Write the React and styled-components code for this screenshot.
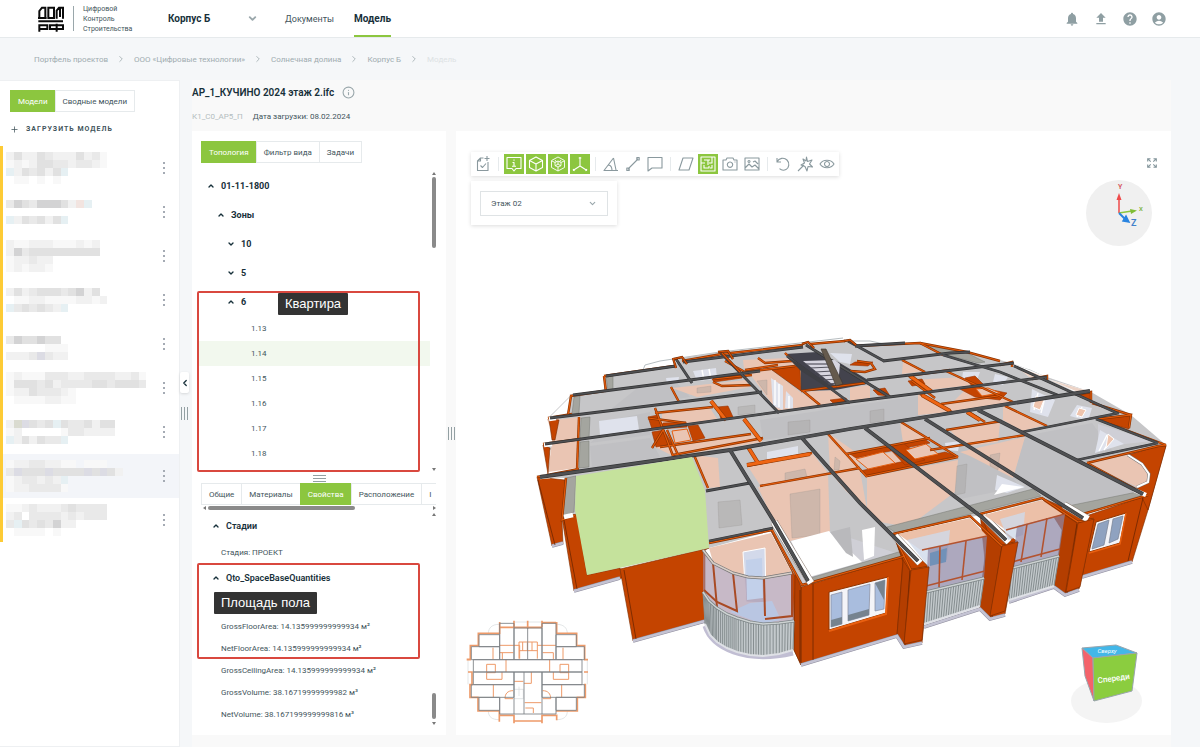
import React from 'react';
import styled, { createGlobalStyle, css } from 'styled-components';
import { MdNotifications, MdFileUpload, MdHelp, MdAccountCircle } from 'react-icons/md';
import { ChevronDown, ChevronUp, ChevronRight, ChevronLeft, Plus, Info } from 'lucide-react';

const GREEN = '#8cc63f';
const INK = '#17303a';
const TEXT = '#43555c';
const MUTED = '#9aa7ab';
const LINE = '#e6eaec';

const Global = createGlobalStyle`
  * { box-sizing: border-box; }
  body { margin: 0; background: #f5f7f9; font-family: Roboto, "Liberation Sans", sans-serif; font-size: 8px; color: ${TEXT}; }
  button, select { font: inherit; color: inherit; }
  a { color: inherit; text-decoration: none; }
  svg { display: block; flex: none; }
`;

const Page = styled.div`
  min-height: 100vh;
  display: flex;
  flex-direction: column;
`;

/* ---------- header ---------- */
const Header = styled.header`
  height: 38px;
  background: #fff;
  border-bottom: 1px solid ${LINE};
  display: flex;
  align-items: stretch;
  padding: 0 33px 0 38px;
`;
const Brand = styled.a`
  display: flex;
  align-items: center;
  width: 130px;
  gap: 9px;
`;
const BrandText = styled.span`
  border-left: 1px solid ${MUTED};
  padding-left: 9px;
  font-size: 7px;
  line-height: 10px;
  height: 25px;
  display: flex;
  flex-direction: column;
  justify-content: center;
`;
const SelectWrap = styled.label`
  position: relative;
  display: flex;
  align-items: center;
  width: ${(p) => p.$width}px;
  svg { position: absolute; right: ${(p) => p.$inset}px; pointer-events: none; }
`;
const PlainSelect = styled.select`
  appearance: none;
  width: 100%;
  padding: 0;
  border: 0;
  background: transparent;
  font-size: 10px;
  font-weight: 700;
  color: ${INK};
`;
const Nav = styled.nav`
  display: flex;
  gap: 20px;
  margin-left: 27px;
  flex: 1;
`;
const NavLink = styled.a`
  display: flex;
  align-items: center;
  font-size: ${(p) => (p.$active ? 10 : 9)}px;
  border-top: 2px solid transparent;
  border-bottom: 2px solid ${(p) => (p.$active ? GREEN : 'transparent')};
  font-weight: ${(p) => (p.$active ? 700 : 400)};
  color: ${(p) => (p.$active ? INK : TEXT)};
`;
const HeaderActions = styled.div`
  display: flex;
  align-items: center;
  gap: 13px;
`;
const IconButton = styled.button`
  border: 0;
  padding: 0;
  background: none;
  color: ${(p) => p.$color || '#8f9fa3'};
  display: flex;
  align-items: center;
  justify-content: center;
`;
const Crumbs = styled.nav`
  height: 42px;
  padding-left: 34px;
  display: flex;
  align-items: center;
  gap: 8px;
  color: #a0acb0;
  a:last-child { color: #dde2e4; }
`;

/* ---------- body ---------- */
const Body = styled.div`
  flex: 1;
  display: flex;
`;
const Sidebar = styled.aside`
  width: 180px;
  background: #fff;
  border: 1px solid #eef0f2;
  border-left: 0;
  padding-top: 9px;
`;
const Tabs = styled.div`
  display: flex;
  height: 22px;
  overflow: hidden;
  margin: ${(p) => p.$margin};
`;
const Tab = styled.button`
  height: 22px;
  padding: 0 7px;
  flex: none;
  border: 1px solid ${LINE};
  margin-left: -1px;
  background: #fff;
  white-space: nowrap;
  &:first-child { margin-left: 0; }
  ${(p) => p.$active && css`
    background: ${GREEN};
    border-color: ${GREEN};
    color: #fff;
  `}
`;
const UploadButton = styled.button`
  display: flex;
  align-items: center;
  gap: 7px;
  margin: 9px 0 9px 10px;
  height: 16px;
  padding: 0;
  border: 0;
  background: none;
  font-size: 7px;
  font-weight: 700;
  letter-spacing: 1px;
`;
const ModelList = styled.ul`
  list-style: none;
  margin: 0;
  padding: 0;
  border-left: 3px solid #fdcb35;
`;
const ModelRow = styled.li`
  height: 44px;
  display: flex;
  align-items: center;
  justify-content: space-between;
  padding: 0 13px 0 3px;
  background: ${(p) => (p.$active ? '#f3f5f9' : '#fff')};
`;
const Gutter = styled.div`
  width: 12px;
  display: grid;
  grid-template-rows: 1fr auto 1fr;
  justify-items: start;
`;
const CollapseButton = styled.button`
  align-self: end;
  margin-bottom: 14px;
  width: 9px;
  height: 21px;
  padding: 0;
  border: 0;
  border-radius: 2px;
  background: #fff;
  box-shadow: 0 1px 3px #0002;
  color: ${INK};
  display: flex;
  align-items: center;
  justify-content: center;
`;
const Workspace = styled.main`
  flex: 1;
  margin-right: 29px;
  padding-bottom: 12px;
  display: flex;
  flex-direction: column;
  background: #f9f9f9;
`;
const TitleBlock = styled.div`
  height: 51px;
  padding-top: 4px;
`;
const TitleRow = styled.div`
  display: flex;
  align-items: center;
  gap: 8px;
  height: 16px;
`;
const Title = styled.h1`
  margin: 0;
  font-size: 10px;
  font-weight: 600;
  color: ${INK};
`;
const MetaRow = styled.div`
  display: flex;
  align-items: center;
  gap: 10px;
  height: 16px;
  margin-top: 8px;
`;
const Faint = styled.span`
  color: #b4bdc0;
`;
const Panels = styled.div`
  flex: 1;
  display: flex;
`;
const Panel = styled.section`
  position: relative;
  width: 254px;
  background: #fff;
  display: flex;
  flex-direction: column;
  padding: 10px 10px 10px 0;
`;
const Splitter = styled.div`
  width: 10px;
  display: flex;
  align-items: center;
  justify-content: center;
`;
const Scroller = styled.div`
  display: flex;
  gap: 1px;
`;
const Tree = styled.ul`
  list-style: none;
  margin: 0;
  padding: 8px 0 5px 5px;
  flex: 1;
`;
const TreeNode = styled.li`
  display: flex;
  align-items: center;
  gap: 6px;
  height: 29px;
  padding-left: ${(p) => 10 + p.$level * 10}px;
  font-size: 9px;
  font-weight: 700;
  color: ${INK};
`;
const TreeLeaf = styled.li`
  display: flex;
  align-items: center;
  height: 25px;
  padding-left: 54px;
  background: ${(p) => (p.$active ? '#f2f8ee' : 'transparent')};
`;
const Track = styled.div`
  width: 5px;
  display: flex;
  flex-direction: column;
  align-items: center;
  margin-top: ${(p) => p.$top}px;
`;
const Thumb = styled.div`
  width: 4px;
  height: ${(p) => p.$size}px;
  border-radius: 2px;
  background: #8a8a8a;
`;
const Fill = styled.div`
  flex: ${(p) => (p.$fixed ? `0 0 ${p.$fixed}px` : 1)};
`;
const Arrow = styled.i`
  width: 0;
  height: 0;
  border: 2px solid transparent;
  ${(p) => p.$dir === 'up' && css`border-bottom: 3px solid #777; border-top: 0; margin-bottom: 2px;`}
  ${(p) => p.$dir === 'down' && css`border-top: 3px solid #777; border-bottom: 0;`}
  ${(p) => p.$dir === 'left' && css`border-right: 3px solid #777; border-left: 0; margin-right: 2px;`}
  ${(p) => p.$dir === 'right' && css`border-left: 3px solid #777; border-right: 0;`}
`;
const Handle = styled.div`
  height: 12px;
  padding: 4px 0 0 10px;
  display: flex;
  justify-content: center;
`;
const HTrack = styled.div`
  display: flex;
  align-items: center;
  height: 6px;
  margin-left: 11px;
`;
const HThumb = styled.div`
  width: 147px;
  height: 4px;
  border-radius: 2px;
  background: #8a8a8a;
`;
const Props = styled.div`
  flex: 1;
  padding: 2px 0 0 20px;
`;
const PropGroup = styled.h2`
  margin: 0;
  height: 26px;
  display: flex;
  align-items: center;
  gap: 6px;
  font-size: 9px;
  font-weight: 600;
  color: ${INK};
`;
const PropRow = styled.div`
  height: ${(p) => (p.$tall ? 26 : 22)}px;
  padding-left: 9px;
  display: flex;
  align-items: center;
  white-space: nowrap;
`;
const Note = styled.span`
  display: inline-block;
  height: 22px;
  line-height: 22px;
  padding: 0 7px;
  border-radius: 1px;
  background: #333;
  color: #fff;
  font-family: "Liberation Sans", sans-serif;
  font-size: 13px;
  font-weight: 400;
  white-space: nowrap;
`;
const NoteRow = styled.div`
  height: 24px;
  padding: 1px 0 0 2px;
`;
const Frame = styled.div`
  position: absolute;
  left: 5px;
  right: 26px;
  top: ${(p) => p.$top}px;
  height: ${(p) => p.$height}px;
  border: 2px solid #d9483f;
  border-radius: 2px;
  text-align: center;
  padding-left: 9px;
  pointer-events: none;
`;

/* ---------- viewer ---------- */
const Viewer = styled.section`
  position: relative;
  flex: 1;
  background: #fff;
  padding: 21px 15px;
`;
const Scene = styled.svg`
  position: absolute;
  inset: 0;
  width: 100%;
  height: 100%;
`;
const Floating = styled.div`
  position: relative;
  width: max-content;
  background: #fff;
  box-shadow: 0 1px 4px #00000024;
`;
const Toolbar = styled(Floating)`
  display: flex;
  align-items: center;
  padding: 2px 1px;
`;
const Tool = styled.button`
  width: 20px;
  height: 20px;
  margin: 0 1px;
  padding: 0;
  border: 0;
  display: flex;
  align-items: center;
  justify-content: center;
  background: ${(p) => (p.$on ? GREEN : 'transparent')};
  color: ${(p) => (p.$on ? '#fff' : '#8a999e')};
`;
const Divider = styled.span`
  width: 1px;
  height: 14px;
  margin: 0 4px;
  background: ${LINE};
`;
const FloorCard = styled(Floating)`
  margin-top: 5px;
  padding: 10px 9px 9px;
`;
const FloorSelect = styled.select`
  appearance: none;
  width: 100%;
  height: 25px;
  padding: 0 10px;
  border: 1px solid #dfe3e5;
  background: #fff;
`;
const Corner = styled.div`
  position: absolute;
  ${(p) => p.$at}
`;

/* ---------- small drawings ---------- */
const Logo = () => (
  <svg width="26" height="26" viewBox="0 0 78 78" fill="none" stroke="#0b0b0b" strokeWidth="6">
    <path d="M4 36V15L12 5h10v31M0 36h26M31 5h17v31H31zM56 38V14l7-9h12v33M66 5v28M1 46h74M4 77V58h24v11H4M36 58h39v11H36zM56 53v24" />
  </svg>
);
const GripV = () => (
  <svg width="8" height="13" viewBox="0 0 8 13" stroke="#93a0a3"><path d="M1.500 0v13M4.500 0v13M7.500 0v13" /></svg>
);
const GripH = () => (
  <svg width="13" height="7" viewBox="0 0 13 7" stroke="#93a0a3"><path d="M0 .5h13M0 3.500h13M0 6.500h13" /></svg>
);
const Dots = () => (
  <svg width="4" height="12" viewBox="0 0 4 12" fill="#a5abb4"><path d="M1 0h2v2H1zM1 5h2v2H1zM1 10h2v2H1z" /></svg>
);

const SHADES = { 1: '#f8f8f8', 2: '#f1f1f1', 3: '#e9e9e9', 4: '#e1e1e1', 5: '#d3d3d4', b: '#e6f0f3', r: '#f2e4e0', p: '#dcdce4', g: '#dadbd0' };
const Mosaic = ({ rows }) => (
  <svg width="156" height={rows.length * 8} viewBox={`0 0 20 ${rows.length}`} preserveAspectRatio="none" shapeRendering="crispEdges">
    {rows.flatMap((row, y) => [...row].map((c, x) => SHADES[c] && (
      <rect key={`${x}-${y}`} x={x} y={y} width="1" height="1" fill={SHADES[c]} />
    )))}
  </svg>
);

const MODELS = [
  ['2422432224231', '1212443323321', 'b243424b', '0110101'],
  ['354355542rb', '', 'b243424b'],
  ['211222111212', '253444444444', '122322', '121221'],
  ['242344434524', '0112211112212', 'b343432b'],
  ['', '3544544', '00000111', '2223p322'],
  ['121113332233332231', '144434233334434443', '122433321', '011112211'],
  ['2gp434b4334244', '12000001332222', 'b242433b'],
  ['1223322110111', '3p444p4444p4p42', '1233232b', '12233331'],
  ['1123222343333', '2303333232333', '3b4343522', '0111101'],
];

const TOOL_PATHS = {
  check: 'M13 6v8.500H2.500V5l3-3h3M5.500 2v3h-3M5.500 9.500l2 2 3.500-4M12 0v5M9.500 2.500h5',
  info: 'M1 1.500h14v11h-5l-2 2.500-2-2.500H1zM8 3.500v1.300M6.500 6.500H8v3.500M6 10.200h4',
  box: 'M8 1l6.500 3.500v7L8 15l-6.500-3.500v-7zM1.500 4.500L8 8l6.500-3.500M8 8v7',
  gearbox: 'M8 1l6.500 3.500v7L8 15l-6.500-3.500v-7zM8 5l3 1.500v3L8 11 5 9.500v-3zM8 8V5M8 8l-3 2M8 8l3 2M5 4l1.500 2M11 4L9.500 6M2 5l3 1.500M14 5l-3 1.500M8 11v4',
  axes: 'M8 1v9L1 14.500M8 10l7 4.500M6.700 2h2.600M1 13l1.500 2M15 13l-1.500 2',
  angle: 'M10.500 2L1 14.500h14M10.500 2L13 14M5.500 9c2 .3 3.500 2.500 3.500 5.500',
  ruler: 'M3 13L13 3M1.800 12h2.400v2.400H1.800zM11.800 1.600h2.400V4h-2.400z',
  comment: 'M1 1.500h14V12H5l-4 3z',
  plane: 'M5 2h10l-4 12H1z',
  plan: 'M1 1h14v14H1zM1 7h4M4 4h4v5M8 4h2M12 1v6h-3M4 9v3h5v-2M12 9v3h-2',
  camera: 'M1 4h3l1-2h6l1 2h3v10H1zM8 6a2.700 2.700 0 1 0 .01 0M12.500 6h1',
  image: 'M1 2h14v12H1zM1 12l4-4 3 3 3-2 4 4M5 4.500a1 1 0 1 0 .01 0M9 6l2-1 3 3',
  undo: 'M2 2v4h4M2 6c2-4 7-5 10-2s2 8-1 9.500-5 .5-6.500-.8',
  wand: 'M1 15l6-6M9.500 1l1 4.500L15 4l-2.500 4 3 3-4.500-.5L10 15l-2-4.500L4 9l3.500-2L6 3l3 2z',
  eye: 'M1 8c3-5 11-5 14 0-3 5-11 5-14 0zM8 5.500a2.500 2.500 0 1 0 .01 0',
};
const ToolIcon = ({ name }) => (
  <svg width="16" height="16" viewBox="0 0 16 16" fill="none" stroke="currentColor" strokeWidth={name === 'gearbox' ? 0.9 : 1.1} strokeLinejoin="round">
    <path d={TOOL_PATHS[name]} />
  </svg>
);
const TOOLS = [
  [['check', 'Проверка']],
  [['info', 'Информация', 1], ['box', 'Модель', 1], ['gearbox', 'Элементы', 1], ['axes', 'Оси', 1]],
  [['angle', 'Угол'], ['ruler', 'Линейка'], ['comment', 'Комментарий']],
  [['plane', 'Сечение'], ['plan', 'План этажа', 1], ['camera', 'Камера'], ['image', 'Изображение']],
  [['undo', 'Сброс'], ['wand', 'Выделение'], ['eye', 'Видимость']],
];

/* ---------- building ---------- */
const PEACH = '#eac5b3';
const BRICK = '#c44400';
const DARK = '#505153';

const Poly = ({ list, fill, ...rest }) => list.map((pts) => <polygon key={pts} points={pts} fill={fill} {...rest} />);
const Lines = ({ list, ...rest }) => list.map((pts) => <polyline key={pts} points={pts} fill="none" {...rest} />);
const Beam = ({ list, color, edge, w }) => (
  <>
    <Lines list={list} stroke={edge} strokeWidth={w} />
    <Lines list={list} stroke={color} strokeWidth={w - 1.2} />
  </>
);

const ROOF = '604,376 674,366 680,358 722,352 803,344 845,341 855,344 920,343 967,352 1012,363 1047,377 1091,392 1131,415 1166,445 1148,495 1083,515 1042,500 980,515 893,534 905,556 803,586 771,531 709,548 587,575 562,520 565,478 537,477 577,470 543,444 579,440 548,418 570,396 604,392';

const WALLS = [
  '537,477 565,480 562,520 563,544 552,546',
  '562,518 577,514 587,575 620,568 622,578 574,591',
  '620,569 709,548 705,550 705,622 633,641',
  '771,531 801,587 801,665 794,650 792,572',
  '801,587 905,556 912,570 905,645 897,635 801,665',
  '893,533 929,567 922,643 904,647 897,635 903,560',
  '980,513 1018,542 1005,614 990,619 979,607 987,540',
  '1042,498 1094,520 1079,589 1065,595 1054,585 1064,525',
  '1083,517 1148,495 1166,445 1148,510 1132,562 1082,577 1092,525',
  '1098,418 1131,415 1129,429 1110,424', '1073,394 1091,392 1091,401', '549,419 559,420 555,440 552,440',
  '543,445 550,448 548,474', '772,370 800,365 801,391', '1158,446 1166,446 1148,510 1137,487 1149,476 1142,463 1128,455',
];
const WALL_SIDES = ['893,533 903,560 910,571 904,647 897,635 903,562', '980,513 987,530 1002,545 990,619 979,607 985,560', '1042,498 1065,515 1077,523 1065,595 1054,585 1062,530', '795,572 801,587 801,665 794,650'];

const ROOMS = [
  '555,420 580,417 577,468 548,472', '747,370 772,370 800,392 823,405 793,411 778,412',
  '662,413 710,408 717,419 662,427', '655,447 750,433 763,442 673,456', '693,455 718,458 720,487 707,488',
  '747,465 812,453 828,473 760,485', '758,487 828,473 830,532 790,541 773,520', '828,433 857,453 860,470 830,472',
  '867,477 958,460 955,492 908,527 880,522 867,508', '900,422 930,438 903,443', '960,452 1025,437 1013,478 970,456',
  '950,430 1000,423 998,442 965,447', '940,405 997,397 1013,402 952,412', '913,380 963,377 973,385 927,390',
  '850,388 870,385 870,398 850,401', '672,388 746,380 750,387 697,397', '743,360 787,358 797,365 744,369',
  '903,361 924,371 902,374', '803,392 835,390 847,402 822,406', '830,472 860,470 867,510 845,490',
  '918,393 935,402 950,412 918,415', '967,388 1000,392 1010,401 950,405', '1003,406 1045,425 1022,431 1003,420',
  '858,460 910,448 930,455 870,470', '547,419 560,417 555,440',
];
const SHADED = ['860,427 930,419 1013,478 1020,487 955,500 905,470', '760,420 850,406 925,395 925,417 860,427 763,440', '1025,436 1092,423 1143,493 1063,506 1013,478', '640,386 676,382 690,397 610,410', '620,418 650,412 650,435 590,443', '590,446 650,438 660,457 592,468'];
const FRONT_SLABS = ['790,541 829,531 905,556 803,584', '1098,424 1098,447 1152,441'];
const OPENINGS = ['790,494 820,489 820,535 792,538', '718,502 740,500 742,525 719,528', '738,407 755,405 755,413 738,415', '788,422 810,420 810,432 788,435', '785,473 805,469 807,477 785,481', '757,381 767,380 767,395', '957,466 967,464 965,493 955,495', '870,411 884,409 884,421 870,423', '835,457 840,461 839,470 834,470', '990,455 1000,453 998,470 990,466', '697,388 711,386 711,392 697,393'];
const PALE = ['599,421 637,416 639,430 600,436', '767,452 798,446 798,456 767,459', '666,378 679,377 678,383 667,384', '693,371 716,368 717,379 697,381', '771,378 783,386 783,410 773,406', '786,391 793,398 793,409 785,408', '945,443 960,441 958,451 946,450', '963,372 980,372 977,380 962,379', '1032,389 1042,394 1055,400 1048,417 1030,412', '1077,405 1092,408 1088,421 1070,416', '1100,430 1124,444 1095,453', '995,374 1008,377 1003,385 993,382', '830,353 852,354 850,364 840,362', '997,475 1025,487 1007,493 995,490'];
const GAPS = ['791,541 829,531 862,562 809,577', '862,530 875,527 874,556 864,560', '1002,484 1024,487 994,495'];
const LEDGES = ['606,377 613,376 613,390 608,391', '574,397 580,396 579,413 572,414', '581,418 590,417 589,438 580,440', '580,442 589,441 589,467 579,468', '565,478 576,476 574,512 563,517', '810,578 902,551 905,556 805,585', '887,527 1033,489 1041,496 896,533', '1063,507 1137,492 1146,494 1083,514', '920,344 967,353 985,362 978,363 943,354'];

const ORANGE_THIN = [
  '604,376 674,366', '604,376 606,392', '570,396 604,391', '571,396 568,415', '548,418 572,414', '543,444 581,439', '579,417 577,470', '537,477 579,469', '566,478 562,520 575,515',
  '682,361 722,354 803,345', '810,344 845,341', '671,387 679,402', '655,408 673,456', '655,413 713,407', '648,418 686,423', '652,448 663,430', '667,430 678,455', '673,455 763,438', '660,447 751,434', '694,455 708,488',
  '747,466 812,453', '760,486 860,468', '828,434 867,477', '846,454 930,438', '867,476 958,457', '901,422 958,457', '930,450 1025,435', '946,430 1002,421', '967,411 985,422', '1005,406 1047,426', '920,394 952,412', '941,404 998,396', '902,360 925,372', '946,371 1013,402', '908,376 950,370', '912,381 935,398', '725,361 745,372 795,366', '745,370 778,365', '758,358 765,363 792,361', '785,353 797,365', '713,382 722,386 752,385', '713,379 752,375', '803,391 820,405', '801,391 865,383', '857,361 871,363 875,369 865,372 850,371', '855,346 920,343 943,355', '920,343 967,352 1000,361', '1000,365 1012,362 1012,367', '1032,379 1047,376 1047,382', '1080,394 1091,392 1091,403', '1098,419 1131,415 1129,428', '1092,403 1131,415', '1110,424 1166,445',
  '709,543 772,530 802,585 905,556', '893,534 970,516 1002,546', '980,514 1042,498 1078,522', '893,534 911,570 929,567', '1002,546 1018,542', '1078,522 1094,519', '1083,514 1148,495', '1087,463 1143,493', '1087,463 1158,446 1166,445',
];
const ORANGE_THICK = ['711,401 726,420', '744,419 761,441', '748,447 758,463', '910,376 932,392', '922,395 950,411', '967,412 980,420', '747,465 810,454'];
const BRICKS = ['648,417 658,415 663,427 652,429', '652,432 664,430 672,444 656,447', '717,407 728,406 733,417 721,419', '688,426 698,425 705,438 693,441', '663,423 686,422 687,427 660,429', '850,454 925,439 930,443 856,458', '860,471 945,452 957,456 867,476', '888,447 903,443 925,460 905,465', '958,388 973,386 1007,393 1000,400 975,397', '965,378 975,376 983,384 972,386', '908,381 922,379 925,384 912,386', '830,400 846,398 848,403 835,405', '873,390 885,388 890,396 878,395', '712,379 742,374 742,378 714,382', '855,362 873,362 868,366 850,365'];
const INNER = ['856,459 883,452 895,463 868,469', '906,450 926,444 938,454 915,459', '976,389 988,388 1000,393 982,396', '672,431 687,429 691,440 675,443'];

const BEAMS = [
  '606,376 676,366', '683,362 803,347', '573,395 760,371', '550,418 762,392', '545,444 850,402 1047,377', '867,380 1014,363', '855,346 905,343', '883,361 950,353 970,352',
  '706,491 750,483', '709,541 773,528', '1022,432 1119,413', '1077,460 1158,443', '1096,419 1158,443', '1014,366 1060,387 1117,413', '943,355 1000,372 1060,396', '721,353 779,413', '676,359 692,383', '787,356 850,403', '806,345 890,397', '848,341 884,361',
];
const MAIN_BEAMS = ['540,477 730,450 850,429 1090,391', '730,450 773,520 808,581', '802,438 860,503 918,561', '865,428 983,518 1006,540', '925,419 1083,518', '978,410 1143,494'];
const BEAM_SOCKETS = ['895,536 920,563', '983,516 1009,542', '1064,505 1088,519', '774,522 811,583'];
const BEAM_ENDS = ['1134,490 1146,495', '540,477 550,476', '549,419 556,418', '544,445 552,444', '564,517 573,515'];

const lerp = (a, b, t) => a + (b - a) * t;
const Railing = ({ top, bottom, count, w = 1 }) => {
  const at = (pts, t) => {
    const p = t * (pts.length - 1);
    const i = Math.min(Math.floor(p), pts.length - 2);
    return [lerp(pts[i][0], pts[i + 1][0], p - i), lerp(pts[i][1], pts[i + 1][1], p - i)];
  };
  return (
    <g>
      <polygon points={[...top, ...[...bottom].reverse()].join(' ')} fill="#c3c9cc" />
      {Array.from({ length: count }, (_, i) => {
        const [x1, y1] = at(top, i / (count - 1));
        const [x2, y2] = at(bottom, i / (count - 1));
        return <line key={i} x1={x1} y1={y1} x2={x2} y2={y2} stroke="#858d8f" strokeWidth={w} />;
      })}
      <polyline points={top.join(' ')} fill="none" stroke="#7d8587" strokeWidth="3" />
      <polyline points={top.join(' ')} fill="none" stroke="#cdd2d2" strokeWidth="1.500" />
      <polyline points={bottom.join(' ')} fill="none" stroke="#dfe1e6" strokeWidth="2" />
    </g>
  );
};

const PLINTH = ['552,546 563,543', '574,591 620,578', '633,641 705,621', '801,665 897,636 904,647 922,643', '924,627 980,609 990,619 1005,615', '1009,602 1054,587 1065,595 1079,590', '1082,577 1132,562'];
const ROUND_RIM = ['703,550 713,563 733,573 748,577 763,578 792,573'];
const BAY_RIM = ['1128,455 1142,464 1149,474 1148,482 1137,487'];

const Building = () => (
  <Scene viewBox="456 131 715 604" role="img" aria-label="3D-модель этажа">
    <Lines list={['643,370 645,365 660,361 720,352 800,343 843,338', '852,341 870,341 889,345', '1012,365 1030,370 1047,378', '1047,379 1075,388 1090,393']} stroke="#a3acb0" strokeWidth="0.8" />
    <polygon points={ROOF} fill="#c6c6c8" />
    <Poly list={['1014,364 1032,379 1047,377', '1048,379 1080,394 1091,392', '604,377 571,396 604,391', '570,397 549,418 570,415']} fill="#fff" />
    <Poly list={SHADED} fill="#c0c0c3" />
    <Poly list={['1015,366 1032,379 1045,377', '1050,380 1078,392 1088,391']} fill="#ecd3c6" />
    <Poly list={FRONT_SLABS} fill="#cfcfd6" />
    <Poly list={ROOMS} fill={PEACH} />
    <Poly list={OPENINGS} fill="#a6a29f" fillOpacity="0.4" stroke="#8f8b88" strokeOpacity="0.6" strokeWidth="0.4" />
    <Poly list={PALE} fill="#dfe2ec" />
    <Lines list={['775,380 775,405', '779,384 779,407', '789,396 789,408', '702,370 704,380', '709,369 711,379', '1038,393 1034,410', '1045,397 1041,413', '1112,438 1104,450', '1107,435 1099,451', '1082,407 1077,417']} stroke="#fff" strokeWidth="1.400" />
    <Poly list={['1036,396 1044,400 1040,410 1033,407', '1079,408 1086,410 1082,417 1076,415', '1108,434 1114,439 1106,448']} fill="#eec4ae" stroke="#fff" strokeWidth="1" />
    <Poly list={GAPS} fill="#fff" />
    <polygon points="830,532 850,527 853,557 846,553 830,532" fill="#b9b9bc" />
    <Poly list={LEDGES} fill="#a4a59f" stroke="#777873" strokeWidth="0.5" />
    <polygon points="785,354 817,352 840,363 868,380 867,384 835,390 801,391 801,367" fill="#43434d" />
    <Poly list={BRICKS} fill={BRICK} stroke="#9a3300" strokeWidth="0.6" />
    <Poly list={INNER} fill={PEACH} stroke="#e65f10" strokeWidth="1" />
    <Poly list={WALLS} fill={BRICK} stroke="#792b00" strokeWidth="0.6" />
    <Poly list={WALL_SIDES} fill="#b43e00" stroke="#792b00" strokeWidth="0.6" />
    <Poly list={['1087,463 1128,455 1140,463 1148,473 1147,481 1137,487']} fill={PEACH} />
    <Lines list={BAY_RIM} stroke="#777" strokeWidth="3" />
    <Lines list={BAY_RIM} stroke="#fff" strokeWidth="2" />
    <Beam list={ORANGE_THIN} color="#e35a0a" edge="#8a3300" w={2.400} />
    <Beam list={ORANGE_THICK} color="#ef6513" edge="#8a3300" w={4.200} />
    <Lines list={BEAM_SOCKETS} stroke="#8b7b70" strokeWidth="7.600" />
    <Lines list={BEAM_SOCKETS} stroke="#fff" strokeWidth="6.600" />
    <Lines list={BEAM_ENDS} stroke="#fff" strokeWidth="4.600" />
    <Beam list={BEAMS} color={DARK} edge="#333436" w={2.800} />
    <Beam list={MAIN_BEAMS} color={DARK} edge="#333436" w={3.800} />
    <Beam list={['674,359 682,357 687,364', '673,358 676,368', '718,352 728,351 733,359', '802,344 808,342 814,348', '844,341 850,340 856,345', '722,353 740,372']} color="#d6520a" edge="#6e2a00" w={2.400} />
    <polygon points="803,361 835,360 840,364 838,385 832,384" fill="#d7d5df" />
    <Lines list={['806,364 830,364', '810,368 832,367', '815,372 833,371', '819,376 834,375', '824,380 836,379', '828,384 838,383']} stroke="#55545f" strokeWidth="1.200" />
    <polygon points="821,349 826,349 843,384 836,386" fill="#655a4d" stroke="#3b342c" strokeWidth="0.6" />
    <polygon points="787,357 801,365 835,389 831,390 801,371" fill="#3e3f44" />

    <polygon points="576,476 692,457 705,490 709,548 587,575 575,510" fill="#c5e29c" />

    <Lines list={PLINTH} stroke="#8f8d9d" strokeWidth="3.600" />
    <Lines list={PLINTH} stroke="#c4c3d3" strokeWidth="2.600" />
    <Lines list={['538,480 555,545', '564,520 577,589', '624,570 636,639', '800,590 800,662', '813,583 813,660', '910,571 905,645', '1002,547 992,617', '1077,524 1067,593', '1143,498 1128,561']} stroke="#6d2600" strokeWidth="0.800" />

    {/* round balcony */}
    <polygon points="709,548 771,533 792,573 764,578 733,573 713,562" fill={PEACH} />
    <polygon points="743,552 765,548 766,603 746,602" fill="#d3d9ea" stroke="#fff" strokeWidth="1" />
    <polygon points="703,550 713,563 733,573 763,578 792,573 794,621 763,624 737,618 717,608 703,592" fill="#a58ea4" fillOpacity="0.62" />
    <polygon points="746,560 762,558 763,598 747,600" fill="#c2d0ea" />
    <polygon points="730,612 750,603 772,601 781,620 762,624" fill="#b9c6e2" />
    <Lines list={['703,550 713,563 717,607', '733,573 737,611 717,602 704,590', '764,578 765,616', '792,573 792,616 765,619']} stroke="#a94a24" strokeWidth="2" />
    <Lines list={ROUND_RIM} stroke="#777" strokeWidth="3" />
    <Lines list={ROUND_RIM} stroke="#d7cdc7" strokeWidth="1.600" />
    <path d="M705 626C712 648 745 664 793 653" fill="none" stroke="#c1bed3" strokeWidth="5" />
    <Railing
      top={[[703, 592], [709, 601], [717, 608], [727, 614], [737, 618], [750, 622], [763, 624], [779, 623], [794, 621]]}
      bottom={[[705, 624], [710, 635], [717, 642], [727, 648], [737, 652], [750, 655], [763, 656], [779, 654], [793, 650]]}
      count={42}
    />

    {/* straight balconies */}
    <polygon points="898,534 970,518 987,536 922,551" fill="#ecc0a8" />
    <polygon points="984,515 1042,500 1064,515 1006,530" fill="#ecc0a8" />
    <Poly list={['907,540 950,530 947,560 928,566', '1000,519 1025,512 1023,535 1008,540']} fill="#cfd9ea" fillOpacity="0.8" />
    <Poly list={['928,549 987,536 984,578 926,592', '1017,526 1065,514 1059,555 1012,567']} fill="#8d86a5" fillOpacity="0.72" />
    <Poly list={['930,553 947,548 946,562 930,566']} fill="#7191b8" />
    <Lines list={['940,546 939,587', '966,541 962,580', '926,586 985,571', '922,550 987,536', '1027,524 1021,562', '1047,518 1041,557', '1012,562 1060,549', '1006,530 1065,514']} stroke="#b35330" strokeWidth="1.600" />
    <Railing top={[[926, 592], [984, 578]]} bottom={[[924, 624], [980, 606]]} count={24} />
    <Railing top={[[1012, 568], [1059, 556]]} bottom={[[1009, 600], [1054, 586]]} count={20} />
    <Poly list={['911,570 929,567 922,640 904,644', '1002,546 1018,542 1005,611 990,616', '1078,523 1094,519 1080,587 1066,592']} fill={BRICK} stroke="#792b00" strokeWidth="0.6" />

    {/* windows */}
    <polygon points="829,592 888,577 886,613 829,630" fill="#f4f4f8" stroke="#8f3500" strokeWidth="1" />
    <polyline points="829,631 886,614 888,577" fill="none" stroke="#ea6010" strokeWidth="2" />
    <Poly list={['831,595 842,592 842,624 831,627', '848,590 870,584 869,615 848,621', '875,583 885,580 884,609 875,611']} fill="#a9bdde" stroke="#858b9d" strokeWidth="0.700" />
    <Poly list={['831,620 842,617 842,624 831,627', '848,615 869,609 869,615 848,621', '875,583 885,580 884,600']} fill="#76838f" />
    <polygon points="1096,522 1126,513 1120,543 1089,552" fill="#f4f4f8" stroke="#8f3500" strokeWidth="1" />
    <polyline points="1089,553 1120,544 1126,513" fill="none" stroke="#ea6010" strokeWidth="1.500" />
    <Poly list={['1098,524 1109,520 1104,545 1092,549', '1113,519 1123,516 1118,539 1109,543']} fill="#8fa2c0" stroke="#777f90" strokeWidth="0.700" />
  </Scene>
);

const FloorMap = () => (
  <svg width="124" height="110" viewBox="10 20 372 330" fill="none">
    <path d="M83 73c0-18 12-28 32-28M320 73c0-18-12-28-32-28M83 305c0 18 12 26 32 26M320 305c0 18-12 26-32 26M160 38h85M22 150v75M380 150v75M160 240h28v28h-28M175 232v28" stroke="#d5d9db" strokeWidth="2" />
    <g stroke="#ee9a69" strokeWidth="5">
      <path d="M160 34v20H117V38M117 40v32H53v37H29v41H18M18 151h12M22 188h12v38h-6v38h24v41h64v32M160 342v-24h-44M160 335h85M244 342v-24h44v15M286 305h64v-41h24v-38h-4M382 188h-12M382 151h-12M372 151v-42h-24V72h-60V38M286 40h-42M244 34v20M201 34v24M160 54h85" />
      <path d="M117 108h60v40M175 148v-50h55v50M186 98v27M200 100v23M214 98v27M175 124h55M125 130v20M117 130h41M246 130h32v20M286 108h-56M97 115v35M307 115v35M136 150v38M267 150v38M98 226v37M303 226v37M78 165h26v25H78zM298 165h26v25h-26zM78 190v20h46v-22M324 190v20h-46v-22M160 216h28M190 222h22v-34M192 280h50M194 296h24v15M133 268c0-15 8-24 24-24M270 268c0-15-8-24-24-24M133 268h24M246 268h24" strokeWidth="3" />
    </g>
    <path d="M117 42h43v109h-43zM160 56h84v95h-84zM201 56v95M244 42h42v109h-42zM55 76h62v36H55zM286 76h61v36h-61zM32 112h85v39H32zM286 112h85v39h-85zM38 151h326v37H38zM38 188h122v38H38zM244 188h120v38H244zM32 226h128v38H32zM244 226h127v38H244zM55 264h62v39H55zM286 264h61v39h-61zM117 264v50h43V188h84v126h42v-50M160 314h84M190 188v126" stroke="#7c8184" strokeWidth="2.600" />
  </svg>
);

const Axes = () => (
  <svg width="66" height="66" viewBox="0 0 66 66">
    <circle cx="33" cy="33" r="33" fill="#f0f0f0" />
    <g strokeWidth="1.500">
      <path d="M33 33V18" stroke="#ef4a4a" /><path d="M33 13l-2.500 7h5z" fill="#ef4a4a" />
      <path d="M33 33l13-2" stroke="#8cc63f" /><path d="M51 30.500l-7-1.500 1 5z" fill="#7fbd35" />
      <path d="M33 33l6 6" stroke="#2a84e0" strokeWidth="2" /><path d="M43 42l-6-1 3-5z" fill="#2a84e0" stroke="#2a84e0" />
    </g>
    <g fontSize="7" fontWeight="700" fontFamily="Roboto, sans-serif">
      <text x="32" y="9" fill="#d65b62">Y</text>
      <text x="53" y="31" fill="#80b544" fontSize="6">X</text>
      <text x="45" y="46" fill="#4181ca" fontSize="9">Z</text>
    </g>
  </svg>
);

const ViewCube = () => (
  <svg width="72" height="80" viewBox="0 0 72 80">
    <ellipse cx="35.500" cy="57" rx="35.500" ry="22" fill="#f4f4f4" />
    <g stroke="#9aa5ad" strokeWidth="1">
      <path d="M11 4l34-3 21 8-44 5z" fill="#43b7e8" />
      <path d="M11 4l11 10 1 43L14 32z" fill="#f4636b" />
      <path d="M22 14l44-5-5 38-38 10z" fill="#8bcd3f" />
    </g>
    <g fill="#fff" textAnchor="middle" fontFamily="Roboto, sans-serif">
      <text x="43" y="37" fontSize="8" fontWeight="500" transform="rotate(-8 43 37)">Спереди</text>
      <text x="36" y="9" fontSize="6" fontStyle="italic">Сверху</text>
    </g>
  </svg>
);

const Expand = () => (
  <svg width="10" height="10" viewBox="0 0 10 10" fill="none" stroke="#82949a" strokeWidth="1.100">
    <path d="M.7 3.500V.7h2.800M.7.7l3 3M6.500.7h2.800v2.800M9.300.7l-3 3M.7 6.500v2.800h2.800M.7 9.300l3-3M9.300 6.500v2.800H6.500M9.300 9.300l-3-3" />
  </svg>
);

const CRUMBS = ['Портфель проектов', 'ООО «Цифровые технологии»', 'Солнечная долина', 'Корпус Б', 'Модель'];
const NODES = [['01-11-1800', 0, true], ['Зоны', 1, true], ['10', 2, false], ['5', 2, false], ['6', 2, true]];
const LEAVES = ['1.13', '1.14', '1.15', '1.16', '1.17', '1.18'];
const QUANTITIES = ['GrossFloorArea: 14.135999999999934 м²', 'NetFloorArea: 14.135999999999934 м²', 'GrossCeilingArea: 14.135999999999934 м²', 'GrossVolume: 38.16719999999982 м³', 'NetVolume: 38.167199999999816 м³'];

export default function App() {
  return (
    <Page>
      <Global />
      <Header>
        <Brand href="#" aria-label="ДОМ.РФ">
          <Logo />
          <BrandText><span>Цифровой</span><span>Контроль</span><span>Строительства</span></BrandText>
        </Brand>
        <SelectWrap $width={90} $inset={0}>
          <PlainSelect aria-label="Корпус"><option>Корпус Б</option></PlainSelect>
          <ChevronDown size={11} color={MUTED} strokeWidth={4} />
        </SelectWrap>
        <Nav>
          <NavLink href="#">Документы</NavLink>
          <NavLink href="#" $active>Модель</NavLink>
        </Nav>
        <HeaderActions>
          <IconButton aria-label="Уведомления"><MdNotifications size={16} /></IconButton>
          <IconButton aria-label="Загрузить"><MdFileUpload size={16} /></IconButton>
          <IconButton aria-label="Помощь"><MdHelp size={16} /></IconButton>
          <IconButton aria-label="Профиль"><MdAccountCircle size={16} /></IconButton>
        </HeaderActions>
      </Header>
      <Crumbs aria-label="Навигация">
        {CRUMBS.map((c, i) => (
          <React.Fragment key={c}>
            {i > 0 && <ChevronRight size={10} />}
            <a href="#">{c}</a>
          </React.Fragment>
        ))}
      </Crumbs>
      <Body>
        <Sidebar>
          <Tabs $margin="0 0 0 10px">
            <Tab $active>Модели</Tab>
            <Tab>Сводные модели</Tab>
          </Tabs>
          <UploadButton><Plus size={9} />ЗАГРУЗИТЬ МОДЕЛЬ</UploadButton>
          <ModelList>
            {MODELS.map((rows, i) => (
              <ModelRow key={i} $active={i === 7}>
                <Mosaic rows={rows} />
                <IconButton aria-label="Действия"><Dots /></IconButton>
              </ModelRow>
            ))}
          </ModelList>
        </Sidebar>
        <Gutter>
          <CollapseButton aria-label="Свернуть"><ChevronLeft size={10} strokeWidth={3} /></CollapseButton>
          <GripV />
        </Gutter>
        <Workspace>
          <TitleBlock>
            <TitleRow>
              <Title>АР_1_КУЧИНО 2024 этаж 2.ifc</Title>
              <Info size={13} color={MUTED} />
            </TitleRow>
            <MetaRow><Faint>К1_С0_АР5_П</Faint><span>Дата загрузки: 08.02.2024</span></MetaRow>
          </TitleBlock>
          <Panels>
            <Panel>
              <Tabs $margin="0 0 0 9px">
                <Tab $active>Топология</Tab>
                <Tab>Фильтр вида</Tab>
                <Tab>Задачи</Tab>
              </Tabs>
              <Scroller>
                <Tree>
                  {NODES.map(([label, level, open]) => (
                    <TreeNode key={label} $level={level}>
                      {open ? <ChevronUp size={8} strokeWidth={4} /> : <ChevronDown size={8} strokeWidth={4} />}
                      {label}
                    </TreeNode>
                  ))}
                  {LEAVES.map((l) => <TreeLeaf key={l} $active={l === '1.14'}>{l}</TreeLeaf>)}
                </Tree>
                <Track $top={9}>
                  <Arrow $dir="up" /><Thumb $size={71} /><Fill /><Arrow $dir="down" />
                </Track>
              </Scroller>
              <Handle><GripH /></Handle>
              <Tabs $margin="0 0 0 9px">
                <Tab>Общие</Tab>
                <Tab>Материалы</Tab>
                <Tab $active>Свойства</Tab>
                <Tab>Расположение</Tab>
                <Tab>I</Tab>
              </Tabs>
              <HTrack><Arrow $dir="left" /><HThumb /><Fill /><Arrow $dir="right" /></HTrack>
              <Scroller>
                <Props>
                  <PropGroup><ChevronUp size={8} strokeWidth={4} />Стадии</PropGroup>
                  <PropRow $tall>Стадия: ПРОЕКТ</PropRow>
                  <PropGroup><ChevronUp size={8} strokeWidth={4} />Qto_SpaceBaseQuantities</PropGroup>
                  <NoteRow><Note>Площадь пола</Note></NoteRow>
                  {QUANTITIES.map((q) => <PropRow key={q}>{q}</PropRow>)}
                </Props>
                <Track $top={2}>
                  <Arrow $dir="up" /><Fill /><Thumb $size={26} /><Fill $fixed={3} /><Arrow $dir="down" />
                </Track>
              </Scroller>
              <Frame $top={160} $height={181}><Note>Квартира</Note></Frame>
              <Frame $top={432} $height={96} />
            </Panel>
            <Splitter><GripV /></Splitter>
            <Viewer>
              <Building />
              <Toolbar role="toolbar">
                {TOOLS.map((group, g) => (
                  <React.Fragment key={g}>
                    {g > 0 && <Divider />}
                    {group.map(([name, label, on]) => (
                      <Tool key={name} $on={on} aria-label={label}><ToolIcon name={name} /></Tool>
                    ))}
                  </React.Fragment>
                ))}
              </Toolbar>
              <FloorCard>
                <SelectWrap $width={128} $inset={11}>
                  <FloorSelect aria-label="Этаж"><option>Этаж 02</option></FloorSelect>
                  <ChevronDown size={9} color={MUTED} strokeWidth={3} />
                </SelectWrap>
              </FloorCard>
              <Corner $at="top: 27px; right: 14px;"><IconButton aria-label="Во весь экран"><Expand /></IconButton></Corner>
              <Corner $at="top: 49px; right: 19px;"><Axes /></Corner>
              <Corner $at="bottom: 9px; left: 8px;"><FloorMap /></Corner>
              <Corner $at="bottom: 11px; right: 28px;"><ViewCube /></Corner>
            </Viewer>
          </Panels>
        </Workspace>
      </Body>
    </Page>
  );
}
